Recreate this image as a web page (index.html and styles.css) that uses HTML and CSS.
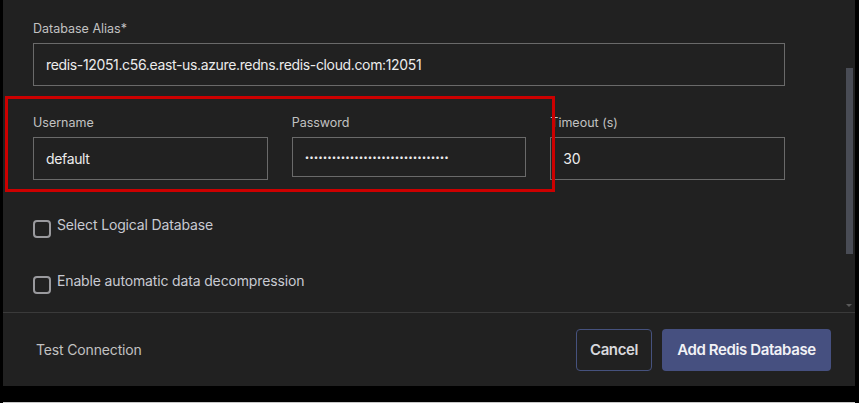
FILE: index.html
```html
<!DOCTYPE html>
<html lang="en">
	<head>
		<meta charset="UTF-8" />
		<title>Add Redis Database</title>
		<link rel="stylesheet" href="styles.css">
	</head>
	<body>
		<div class="panel">
			<div class="scroll-area">
				<form class="db-form">
					<div class="field">
						<label class="field-label">Database Alias*</label>
						<input class="field-input" type="text" value="redis-12051.c56.east-us.azure.redns.redis-cloud.com:12051" readonly />
					</div>

					<div class="field-row">
						<div class="field">
							<label class="field-label">Username</label>
							<input class="field-input" type="text" value="default" readonly />
						</div>
						<div class="field">
							<label class="field-label">Password</label>
							<input class="field-input field-input--short" type="password" value="12345678901234567890123456789012" readonly />
						</div>
						<div class="field">
							<label class="field-label">Timeout (s)</label>
							<input class="field-input" type="text" value="30" readonly />
						</div>
					</div>

					<label class="check">
						<span class="check-box"></span>
						<span>Select Logical Database</span>
					</label>
					<label class="check">
						<span class="check-box"></span>
						<span>Enable automatic data decompression</span>
					</label>
				</form>

				<!-- annotation around the credentials -->
				<div class="highlight"></div>

				<div class="scrollbar"></div>
				<div class="scroll-arrow"></div>
			</div>

			<div class="footer">
				<span class="test-link">Test Connection</span>
				<div class="actions">
					<button class="btn btn-secondary">Cancel</button>
					<button class="btn btn-primary">Add Redis Database</button>
				</div>
			</div>
		</div>
	</body>
</html>
```

FILE: styles.css
```css
body {
	margin: 0;
	background: #000;
	font-family: Inter, "Noto Sans", sans-serif;
	height: 403px;
	overflow: hidden;
}

.panel {
	margin-left: 3px;
	width: 852px;
	height: 386px;
	background: #212121;
	display: flex;
	flex-direction: column;
	border-bottom: 16px solid #000;
	box-shadow: 0 1px 0 #c8c8c8;
}

.scroll-area {
	position: relative;
	height: 312px;
	overflow: hidden;
}

.db-form {
	padding: 21px 70px 0 30px;
}

.field {
	display: flex;
	flex-direction: column;
}

.field-label {
	font-size: 12.5px;
	line-height: 16px;
	color: #c2c2c2;
	margin-bottom: 6px;
}

.field-input {
	box-sizing: border-box;
	height: 43px;
	width: 100%;
	margin: 0;
	padding: 0 12px;
	background: transparent;
	border: 1px solid #6a6a6a;
	border-radius: 0;
	color: #ececec;
	font-family: inherit;
	font-size: 14px;
	letter-spacing: -0.35px;
	outline: none;
}

.field-input--short {
	height: 40px;
	font-size: 8px;
	letter-spacing: 0;
	padding-bottom: 1px;
}

.field-row {
	display: grid;
	grid-template-columns: repeat(3, 1fr);
	gap: 24px;
	margin-top: 29px;
}

.check {
	display: flex;
	align-items: flex-start;
	gap: 6px;
	font-size: 14px;
	letter-spacing: -0.15px;
	color: #c8cad2;
	line-height: 16px;
	margin-top: 37px;
}

.check + .check {
	margin-top: 35px;
}

.check-box {
	box-sizing: border-box;
	width: 18px;
	height: 18px;
	margin-top: 3px;
	border: 2px solid #9a9a9e;
	border-radius: 4px;
	flex-shrink: 0;
}

.highlight {
	position: absolute;
	left: 2px;
	top: 96px;
	width: 550px;
	height: 96px;
	box-sizing: border-box;
	border: 3px solid #cc0000;
	pointer-events: none;
}

.scrollbar {
	position: absolute;
	right: 2px;
	top: 68px;
	width: 7px;
	height: 186px;
	background: #494c55;
}

.scroll-arrow {
	position: absolute;
	right: 3px;
	top: 304px;
	border-left: 3px solid transparent;
	border-right: 3px solid transparent;
	border-top: 3px solid #5a5a5a;
}

.footer {
	flex: 1;
	border-top: 1px solid #3a3a3a;
	display: flex;
	align-items: center;
	justify-content: space-between;
	padding: 0 24px 0 33px;
}

.test-link {
	font-size: 14px;
	letter-spacing: -0.15px;
	color: #c2c2c2;
}

.actions {
	display: flex;
	gap: 10px;
}

.btn {
	height: 42px;
	border-radius: 4px;
	font-family: inherit;
	font-size: 15px;
	font-weight: 600;
	letter-spacing: -0.4px;
	white-space: nowrap;
	padding: 0;
	cursor: pointer;
}

.btn-secondary {
	background: transparent;
	border: 1px solid #46527e;
	color: #d8d8dc;
	width: 76px;
}

.btn-primary {
	background: #465080;
	border: none;
	color: #f2f2f6;
	width: 169px;
}
```
